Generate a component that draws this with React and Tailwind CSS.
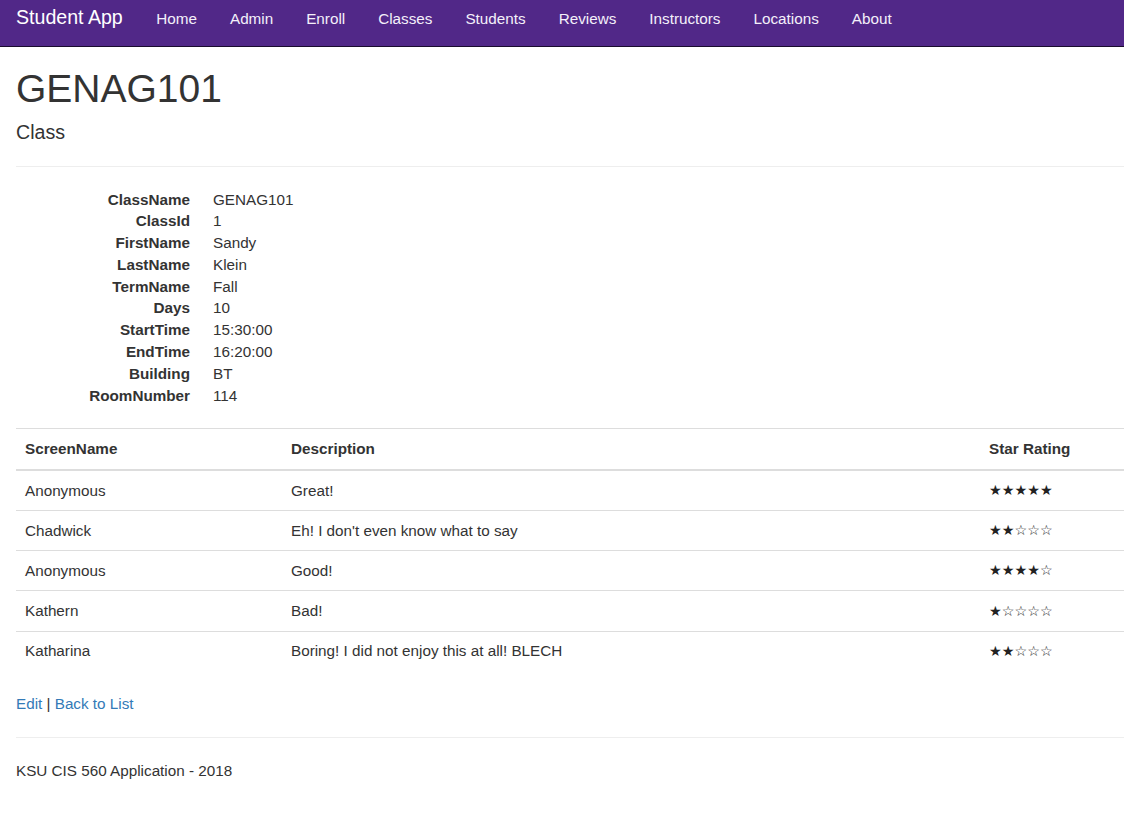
const navLinks = ['Home', 'Admin', 'Enroll', 'Classes', 'Students', 'Reviews', 'Instructors', 'Locations', 'About'];

const details = [
  ['ClassName', 'GENAG101'],
  ['ClassId', '1'],
  ['FirstName', 'Sandy'],
  ['LastName', 'Klein'],
  ['TermName', 'Fall'],
  ['Days', '10'],
  ['StartTime', '15:30:00'],
  ['EndTime', '16:20:00'],
  ['Building', 'BT'],
  ['RoomNumber', '114'],
];

const reviews = [
  { name: 'Anonymous', text: 'Great!', stars: 5 },
  { name: 'Chadwick', text: "Eh! I don't even know what to say", stars: 2 },
  { name: 'Anonymous', text: 'Good!', stars: 4 },
  { name: 'Kathern', text: 'Bad!', stars: 1 },
  { name: 'Katharina', text: 'Boring! I did not enjoy this at all! BLECH', stars: 2 },
];

function Stars({ count }) {
  // filled then hollow, always five
  const s = '★'.repeat(count) + '☆'.repeat(5 - count);
  return <span className="text-[14.2px] leading-[21.8px] text-[#222]" style={{ fontFamily: '"DejaVu Sans", sans-serif' }}>{s}</span>;
}

export default function App() {
  return (
    <div className="min-h-[832px] bg-white text-[#333] text-[15.26px] leading-[21.8px]" style={{ fontFamily: '"Liberation Sans", Arial, sans-serif' }}>
      <nav className="h-[47px] bg-[#512888] border-b border-[#1a0d2e] flex items-start">
        <a className="pl-4 pr-[17px] pt-[7px] text-[19.6px] leading-[21.8px] text-white">Student App</a>
        <ul className="flex">
          {navLinks.map((l) => (
            <li key={l}>
              <a className="block px-[16.5px] pt-[8px] text-[#f4f0fa]">{l}</a>
            </li>
          ))}
        </ul>
      </nav>

      <div className="pl-4">
        <h1 className="mt-[21px] text-[39px] leading-[42.9px] font-normal">GENAG101</h1>
        <h4 className="mt-[11px] text-[19.6px] leading-[21.6px] font-normal">Class</h4>
        <hr className="mt-[22px] border-t border-[#eee]" />

        <dl className="mt-[22px] mb-[22px]">
          {details.map(([k, v]) => (
            <div key={k} className="flex">
              <dt className="w-[174px] text-right font-bold">{k}</dt>
              <dd className="ml-[23px]">{v}</dd>
            </div>
          ))}
        </dl>

        <table className="w-full table-fixed border-collapse">
          <colgroup>
            <col className="w-[266px]" />
            <col className="w-[698px]" />
            <col />
          </colgroup>
          <thead>
            <tr className="border-t border-[#ddd]">
              <th className="text-left font-bold px-[9px] py-[9px] border-b-2 border-[#ddd]">ScreenName</th>
              <th className="text-left font-bold px-[9px] py-[9px] border-b-2 border-[#ddd]">Description</th>
              <th className="text-left font-bold px-[9px] py-[9px] border-b-2 border-[#ddd]">Star Rating</th>
            </tr>
          </thead>
          <tbody>
            {reviews.map((r, i) => (
              <tr key={i} className={i > 0 ? 'border-t border-[#ddd]' : ''}>
                <td className="px-[9px] py-0 h-[40.2px] align-middle">{r.name}</td>
                <td className="px-[9px] py-0 h-[40.2px] align-middle">{r.text}</td>
                <td className="px-[9px] py-0 h-[40.2px] align-middle"><Stars count={r.stars} /></td>
              </tr>
            ))}
          </tbody>
        </table>

        <p className="mt-[22px]">
          <a className="text-[#337ab7]">Edit</a> | <a className="text-[#337ab7]">Back to List</a>
        </p>
        <hr className="mt-[22px] border-t border-[#eee]" />
        <footer className="mt-[22px]">
          <p>KSU CIS 560 Application - 2018</p>
        </footer>
      </div>
    </div>
  );
}
